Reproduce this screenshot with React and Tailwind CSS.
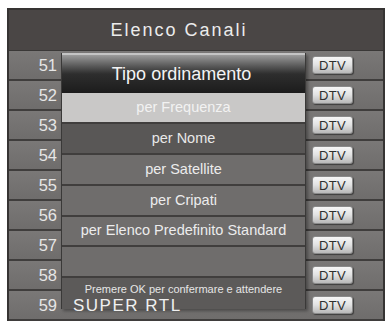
const CHANNELS = [
  { num: 51, name: '' },
  { num: 52, name: '' },
  { num: 53, name: '' },
  { num: 54, name: '' },
  { num: 55, name: '' },
  { num: 56, name: '' },
  { num: 57, name: '' },
  { num: 58, name: '' },
  { num: 59, name: 'SUPER RTL' },
]

const OPTIONS = [
  { label: 'per Frequenza', cls: 'h-[31px] bg-[#c9c8c7] text-[#f2f2f2]' },
  { label: 'per Nome', cls: 'h-[31px] bg-[#595756] text-[#e8e8e8]' },
  { label: 'per Satellite', cls: 'h-[31px] bg-[#6f6d6c] text-[#ececec]' },
  { label: 'per Cripati', cls: 'h-[31px] bg-[#6f6d6c] text-[#ececec]' },
  { label: 'per Elenco Predefinito Standard', cls: 'h-[30px] bg-[#6f6d6c] text-[#ececec]' },
  { label: '', cls: 'h-[31px] bg-[#6f6d6c] text-[#ececec]' },
]

function DtvBadge() {
  return (
    <div className="mt-[5px] mr-[30px] w-[41px] h-[18px] flex items-center justify-center rounded-[3px] border border-[#8a8a8a] bg-gradient-to-b from-[#f6f6f6] via-[#e2e2e2] to-[#b9b9b9] shadow-[1px_1px_1px_rgba(0,0,0,0.45)] text-[13px] leading-none text-[#2f2f2f] tracking-[0.3px]">
      DTV
    </div>
  )
}

function ChannelRow({ ch }) {
  return (
    <div className="h-[30px] flex border-b-2 border-[#3f3d3c] bg-gradient-to-b from-[#7a7877] to-[#6f6d6c]">
      <div className="w-[49px] pr-[1px] flex items-center justify-end text-[16.5px] leading-none text-[#e6e6e6]">
        {ch.num}
      </div>
      <div className="relative z-20 flex-1 pl-[15px] pt-[5px] text-[17px] leading-[20px] tracking-[1.5px] text-[#f0f0f0]">
        {ch.name}
      </div>
      <DtvBadge />
    </div>
  )
}

function SortPopup() {
  return (
    <div className="absolute z-10 left-[52px] top-[43px] w-[245px] flex flex-col border-x border-[#3a3938] shadow-[2px_2px_3px_rgba(0,0,0,0.35)]">
      <div className="h-[40px] flex items-center justify-center pr-[4px] border-t-2 border-[#c4c4c4] bg-gradient-to-b from-[#9c9c9c] via-[#2e2e2e] to-[#1c1c1c] text-[18px] text-[#f4f4f4]">
        Tipo ordinamento
      </div>
      {OPTIONS.map((o, i) => (
        <div
          key={i}
          className={`flex items-center justify-center border-b-2 border-[#403e3d] text-[14.5px] ${o.cls}`}
        >
          {o.label}
        </div>
      ))}
      <div className="h-[31px] bg-[#5c5a59] pt-[6px] text-center text-[11px] leading-none text-[#e6e6e6]">
        Premere OK per confermare e attendere
      </div>
    </div>
  )
}

export default function App() {
  return (
    <div className="w-[387px] h-[323px] bg-white overflow-hidden font-['Liberation_Sans',Arial,sans-serif]">
      <div className="ml-[7px] mt-[8px] w-[378px] border-2 border-b-0 border-[#363433]">
        <div className="relative">
          <div className="h-[41px] flex items-center justify-center pr-[34px] border-b border-[#3a3837] bg-[#4a4645] text-[18px] tracking-[2px] text-[#ececec]">
            Elenco Canali
          </div>
          {CHANNELS.map((ch) => (
            <ChannelRow key={ch.num} ch={ch} />
          ))}
          <SortPopup />
        </div>
      </div>
    </div>
  )
}
